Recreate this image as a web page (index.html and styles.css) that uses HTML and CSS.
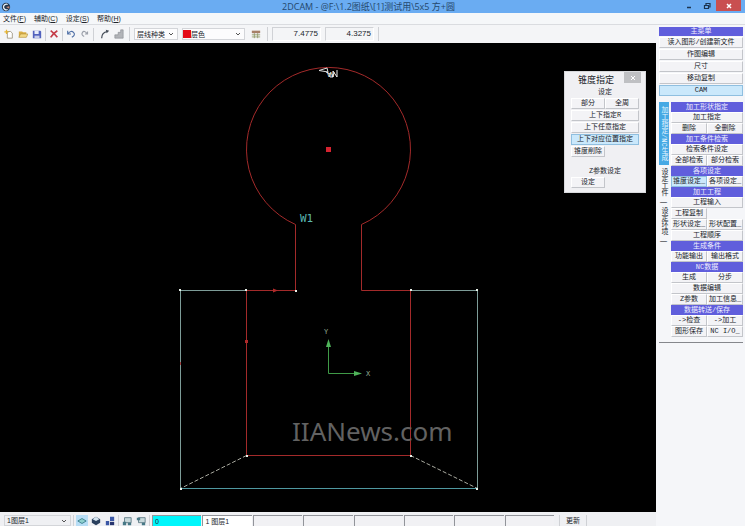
FILE: index.html
```html
<!DOCTYPE html>
<html lang="zh-CN">
<head>
<meta charset="utf-8">
<title>2DCAM</title>
<link rel="stylesheet" href="styles.css">
</head>
<body>
<header class="titlebar">
  <svg class="app-icon" viewBox="0 0 12 12" aria-hidden="true"><circle cx="6" cy="6" r="5" fill="#26384e"/><path d="M8 3a3.4 3.4 0 1 0 0 6" fill="none" stroke="#e4eef8" stroke-width="1.6"/><path d="M6 6l4-1v3z" fill="#c98b7a"/></svg>
  <h1 class="title">2DCAM - @F:\1.2图纸\[1]测试用\5x5 方+圆</h1>
  <div class="window-controls">
    <button class="win" aria-label="最小化"><svg viewBox="0 0 8 8"><path d="M2 5.500h4" stroke="#1c3450" stroke-width="1.500"/></svg></button>
    <button class="win" aria-label="还原"><svg viewBox="0 0 8 8"><path d="M3 3V1.500h4V5H5.500M1.500 3.500h4v3h-4z" fill="none" stroke="#1c3450" stroke-width="1.200"/></svg></button>
    <button class="win win-close" aria-label="关闭"><svg viewBox="0 0 8 8"><path d="M2 2l4 4M6 2L2 6" stroke="#fff" stroke-width="1.500"/></svg></button>
  </div>
</header>
<nav class="menubar">
  <button>文件(<u>F</u>)</button>
  <button>辅助(<u>C</u>)</button>
  <button>设定(<u>S</u>)</button>
  <button>帮助(<u>H</u>)</button>
</nav>
<div class="workspace">
  <main class="editor">
    <div class="toolbar">
      <div class="tools">
        <button class="tool" aria-label="新建"><svg viewBox="0 0 12 12"><path d="M4 3h4l2 2v6H4z" fill="#fff" stroke="#9a927d"/><path d="M3 1v5M.5 3.500h5" stroke="#e6b532" stroke-width="1.500"/></svg></button>
        <button class="tool" aria-label="打开"><svg viewBox="0 0 12 12"><path d="M1 10V3h4l1 1h4v6z" fill="#d9ae45"/><path d="M1 10l2-4h9l-2 4z" fill="#f4d984" stroke="#a4802c" stroke-width=".6"/></svg></button>
        <button class="tool" aria-label="保存"><svg viewBox="0 0 12 12"><path d="M1 2h9l1 1v8H1z" fill="#5262bd"/><path d="M3 2h5v4H3z" fill="#e8edfa"/><path d="M3 8h6v3H3z" fill="#c7cdea"/></svg></button>
        <i class="rule"></i>
        <button class="tool" aria-label="删除"><svg viewBox="0 0 12 12"><path d="M2 2q4 3 8 8M10 2Q5 5 2 10" fill="none" stroke="#c43c48" stroke-width="2"/></svg></button>
        <i class="rule"></i>
        <button class="tool" aria-label="撤销"><svg viewBox="0 0 12 12"><path d="M2 2v4h4M2 6q4-5 7-2t-2 6" fill="none" stroke="#5272a8" stroke-width="1.400"/></svg></button>
        <button class="tool" aria-label="重做"><svg viewBox="0 0 12 12"><path d="M9 3v3H6M9 6Q5 1 3 4t2 5" fill="none" stroke="#9ba0aa" stroke-width="1.400"/></svg></button>
        <i class="rule"></i>
        <button class="tool tool-wide" aria-label="圆弧"><svg viewBox="0 0 12 12"><path d="M2 11Q2 4 9 3" fill="none" stroke="#444c57" stroke-width="1.500"/><path d="M7 1l4 1-3 3z" fill="#444c57"/></svg></button>
        <button class="tool" aria-label="台阶"><svg viewBox="0 0 12 12"><path d="M1 11V7h4V4h3V1h3v10z" fill="#b2b4b8" stroke="#85888f" stroke-width=".7"/></svg></button>
      </div>
      <i class="rule"></i>
      <select class="line-kind" aria-label="层线种类"><option>层线种类</option></select>
      <div class="color-pick"><span class="swatch"></span><select aria-label="颜色"><option>层色</option></select></div>
      <button class="tool tool-last" aria-label="线型表"><svg viewBox="0 0 12 12"><path d="M1 2h10v3H1z" fill="#a78068"/><path d="M1 7h10M1 9.500h10M4 5v6M8 5v6" stroke="#8e9665"/></svg></button>
      <i class="rule"></i>
      <output class="coord" aria-label="X">7.4775</output>
      <output class="coord" aria-label="Y">4.3275</output>
      <i class="rule"></i>
    </div>
    <div class="canvas">
      <svg class="drawing" viewBox="0 43 656 469" preserveAspectRatio="xMinYMin meet" role="img" aria-label="5x5 方+圆">
        <g fill="none" stroke-width="1">
          <path d="M295.500 290.500V224.500A82 82 0 1 1 361.500 224.500V290.500H410.500V455.500H246.500V290.500H295.500" stroke="#a32a2a"/>
          <path d="M246.500 290.500H180.500V488.500M410.500 290.500H477.500V488.500" stroke="#7d9c98"/>
          <path d="M180.500 488.500H477.500" stroke="#4f98a0"/>
          <path d="M246.500 455.500L180.500 488.500M410.500 455.500L477.500 488.500" stroke="#a9aaa0" stroke-dasharray="4 2"/>
          <path d="M328.500 346V373.500H355" stroke="#3f9a47"/>
        </g>
        <path d="M328.500 339l-2.500 8h5zM362 373.500l-8-2.500v5z" fill="#4fb45a"/>
        <g fill="#e8f0e8">
          <path d="M179 289h2v2h-2zM245 289h2v2h-2zM295 290h2v2h-2zM410 289h2v2h-2zM476 289h2v2h-2zM246 455h2v2h-2zM410 455h2v2h-2zM180 488h2v2h-2zM476 488h2v2h-2z"/>
        </g>
        <path d="M326 147h5v5h-5z" fill="#d52330"/>
        <path d="M273 288.500l5 2-5 2zM245 340h3v3h-3z" fill="#b02a2a"/>
        <path d="M180 362h1v3h-1z" fill="#a04040"/>
        <path d="M327 68l-8 2.500 9 1.500zM326 72l4 2M330 73v4h3v-3" fill="none" stroke="#ddd"/>
        <text class="marks" x="327" y="77">W</text>
        <path d="M333 77v-6l4 6v-7" fill="none" stroke="#eee"/>
        <text class="label" x="300" y="222">W1</text>
        <text class="axis" x="324" y="334">Y</text>
        <text class="axis" x="366" y="376">X</text>
        <text class="watermark" x="292" y="441">IIANews.com</text>
      </svg>
    </div>
    <footer class="statusbar">
      <select class="layer" aria-label="图层"><option>1图层1</option></select>
      <i class="rule"></i>
      <button class="tool chosen" aria-label="平面"><svg viewBox="0 0 12 12"><path d="M1 6l5-3 5 3-5 3z" fill="#8ed0ce" stroke="#337887"/></svg></button>
      <button class="tool" aria-label="实体"><svg viewBox="0 0 12 12"><path d="M6 1l5 3v4l-5 3-5-3V4z" fill="#2b405e"/><path d="M6 1l4 3-4 2-4-2z" fill="#d4e4ef"/></svg></button>
      <button class="tool" aria-label="层块"><svg viewBox="0 0 12 12"><path d="M1 6h4v5H1zM6 1h5v5H6z" fill="#3b57a5"/><path d="M6 7h5v4H6z" fill="#28366f"/></svg></button>
      <i class="rule"></i>
      <button class="tool" aria-label="视图一"><svg viewBox="0 0 12 12"><path d="M3 2h8v6H3z" fill="#c8d9dc" stroke="#597681"/><path d="M1 7h4v4H1zM7 8h4v3H7z" fill="#477987"/></svg></button>
      <button class="tool" aria-label="视图二"><svg viewBox="0 0 12 12"><path d="M3 2h8v6H3z" fill="#c8d9dc" stroke="#597681"/><path d="M1 2h4v3H1zM7 8h4v3H7z" fill="#477987"/></svg></button>
      <i class="rule"></i>
      <div class="slots">
        <input class="slot slot-cyan" aria-label="层号" value="0">
        <input class="slot slot-white" aria-label="层一" value="1 图层1">
        <input class="slot" aria-label="层二"><input class="slot" aria-label="层三"><input class="slot" aria-label="层四"><input class="slot" aria-label="层五"><input class="slot" aria-label="层六"><input class="slot" aria-label="层七">
      </div>
      <i class="rule"></i>
      <button class="update">更新</button>
      <i class="rule"></i>
    </footer>
    <section class="dialog" aria-labelledby="dialog-title">
      <div class="dialog-head"><h2 id="dialog-title">锥度指定</h2><button class="dialog-close" aria-label="关闭"><svg viewBox="0 0 8 8"><path d="M2 2l4 4M6 2L2 6" stroke="#fff"/></svg></button></div>
      <div class="dialog-body">
        <p class="wide">设定</p>
        <button>部分</button><button>全周</button>
        <button class="wide">上下指定R</button>
        <button class="wide">上下任意指定</button>
        <button class="wide active">上下对应位置指定</button>
        <button>锥度削除</button>
        <p class="wide">Z参数设定</p>
        <button>设定</button>
      </div>
    </section>
  </main>
  <aside class="sidebar">
    <section class="panel main-menu">
      <h2>主菜单</h2>
      <button class="wide">读入图形/创建新文件</button>
      <button class="wide">作图编辑</button>
      <button class="wide">尺寸</button>
      <button class="wide">移动复制</button>
      <button class="wide active">CAM</button>
    </section>
    <div class="cam">
      <div class="tabs" role="tablist">
        <button role="tab" aria-selected="true" class="tab selected">加工指定/NC生成</button>
        <button role="tab" class="tab">设定工件 |</button>
        <button role="tab" class="tab">设定环境 |</button>
      </div>
      <section class="panel cam-panel">
        <h2>加工形状指定</h2>
        <button class="wide">加工指定</button>
        <button>删除</button><button>全删除</button>
        <h2>加工条件检索</h2>
        <button class="wide">检索条件设定</button>
        <button>全部检索</button><button>部分检索</button>
        <h2>各项设定</h2>
        <button class="active">锥度设定_</button><button>各项设定_</button>
        <h2>加工工程</h2>
        <button class="wide">工程输入</button>
        <button class="alone">工程复制</button>
        <button>形状设定_</button><button>形状配置_</button>
        <button class="wide">工程顺序</button>
        <h2>生成条件</h2>
        <button>功能输出</button><button>输出格式</button>
        <h2>NC数据</h2>
        <button>生成</button><button>分步</button>
        <button class="wide">数据编辑</button>
        <button>Z参数</button><button>加工信息_</button>
        <h2>数据转送/保存</h2>
        <button>-&gt;检查</button><button>-&gt;加工</button>
        <button>图形保存</button><button>NC I/O_</button>
      </section>
    </div>
  </aside>
</div>
</body>
</html>
```
FILE: styles.css
```css
* { box-sizing: border-box; }

body {
  margin: 0;
  height: 100vh;
  display: flex;
  flex-direction: column;
  overflow: hidden;
  background: #f5f6f9;
  color: #20242a;
  font: 7px/9px "Liberation Sans", "Noto Sans CJK SC", sans-serif;
}

button, select, input {
  margin: 0;
  padding: 0;
  border: 0;
  border-radius: 0;
  background: none;
  color: inherit;
  font: inherit;
}

h1, h2, p { margin: 0; font: inherit; }
svg { display: block; }

.titlebar {
  display: flex;
  align-items: center;
  height: 13px;
  padding-left: 1px;
  background: #6aacf2;
}
.app-icon { width: 10px; height: 10px; }
.title {
  flex: 1;
  padding-left: 46px;
  text-align: center;
  color: #25486c;
  font: 9px/13px "Open Sans", "Noto Sans CJK SC", sans-serif;
}
.window-controls { display: flex; align-self: flex-start; padding-right: 4px; }
.win { display: grid; place-items: center; width: 18px; height: 11px; }
.win svg { width: 8px; height: 8px; }
.win-close { width: 25px; background: #c94f50; }

.menubar {
  display: flex;
  gap: 8px;
  height: 12px;
  padding-left: 3px;
  background: #f5f7f9;
  border-bottom: 1px solid #dadce0;
}

.workspace { display: flex; flex: 1; min-height: 0; }
.editor { position: relative; display: flex; flex: 1; flex-direction: column; min-width: 0; }

.toolbar {
  display: flex;
  align-items: center;
  gap: 4px;
  height: 18px;
  padding: 2px 3px;
  background: #f4f5f7;
}
.tools { display: flex; align-items: center; gap: 2px; }
.rule { flex: none; align-self: stretch; width: 1px; background: #cfd1d5; }
.tool { display: grid; flex: none; place-items: center; width: 12px; height: 13px; }
.tool svg { width: 10px; height: 10px; }
.tool-wide { margin-left: 3px; }
.tool-last { margin: 0 1px; }

select {
  appearance: none;
  padding: 0 12px 0 2px;
  background: url("data:image/svg+xml,%3Csvg xmlns='http://www.w3.org/2000/svg' viewBox='0 0 6 6'%3E%3Cpath d='M1 2l2 2 2-2' fill='none' stroke='%23555'/%3E%3C/svg%3E") right 3px center / 6px 6px no-repeat #fcfcfd;
  border: 1px solid #d3d5d9;
}
.line-kind { width: 44px; height: 12px; }
.color-pick {
  display: flex;
  align-items: center;
  width: 63px;
  height: 12px;
  background: #fcfcfd;
  border: 1px solid #d3d5d9;
}
.color-pick select { flex: 1; padding-left: 0; border: 0; }
.swatch { width: 8px; height: 8px; background: #e40b18; }
.coord {
  width: 49px;
  height: 14px;
  padding-right: 2px;
  border: 1px solid #d0d2d6;
  border-right-color: #fff;
  border-bottom-color: #fff;
  text-align: right;
  font: 8px/12px "Liberation Sans", sans-serif;
}

.canvas { flex: 1; min-height: 0; background: #000; }
.drawing { width: 100%; height: 100%; }
.label { fill: #5bb8b0; font: 11px "DejaVu Sans Mono", monospace; }
.axis { fill: #91a891; font: 7px "DejaVu Sans Mono", monospace; }
.marks { fill: #fff; font: 8px "Liberation Sans", sans-serif; }
.watermark { fill: #626262; font: 26px "Noto Sans", sans-serif; }

.statusbar {
  display: flex;
  align-items: stretch;
  gap: 2px;
  height: 14px;
  padding: 3px 0 0 4px;
  background: #eff0f3;
}
.statusbar .tool { height: 11px; }
.layer { flex: none; width: 67px; background-color: #eff0f3; }
.chosen { background: #b7ddf5; }
.slots { display: flex; flex: 1; gap: 1px; min-width: 0; padding-right: 3px; }
.slot {
  flex: 1;
  min-width: 0;
  padding-left: 2px;
  background: #f1f1f4;
  border: 1px solid #92949a;
  border-width: 1px 0 0 1px;
}
.slot-cyan { background: #00f6fb; }
.slot-white { background: #fff; }
.update { flex: none; width: 22px; }
.statusbar > .rule:last-child { margin-right: 69px; }

.dialog {
  position: absolute;
  top: 46px;
  right: 10px;
  width: 82px;
  height: 122px;
  background: #f0f0f3;
  border: 1px solid #d8d9dc;
}
.dialog-head { display: flex; justify-content: space-between; height: 16px; padding-right: 4px; }
.dialog-head h2 { padding-left: 13px; font-size: 9px; line-height: 17px; }
.dialog-close { display: grid; place-items: center; width: 17px; height: 11px; background: #bfc0c3; }
.dialog-close svg { width: 8px; height: 8px; }
.dialog-body {
  display: grid;
  grid-template-columns: 1fr 1fr;
  grid-template-rows: 9px repeat(5, 11px) 18px 11px;
  row-gap: 1px;
  padding: 0 6px;
}
.dialog-body p { align-self: end; text-align: center; }

.dialog-body, .panel, .tabs { font-family: "Liberation Mono", "Noto Sans CJK SC", monospace; }

.dialog-body button, .panel button {
  overflow: hidden;
  background: #f3f3f6;
  border: 1px solid #fff;
  border-right-color: #c3c5ca;
  border-bottom-color: #c3c5ca;
  text-align: center;
  white-space: nowrap;
}
.wide { grid-column: 1 / -1; }
.alone, .alone + button { grid-column: 1; }
.dialog-body .active, .panel .active { background: #cae8fb; border-color: #8fbfe0; }

.sidebar {
  flex: none;
  width: 89px;
  padding: 2px 2px 0 3px;
  background: #f5f6f9;
}
.panel {
  display: grid;
  grid-template-columns: 1fr 1fr;
  grid-auto-rows: 11px;
}
.panel h2 {
  grid-column: 1 / -1;
  background: #605edc;
  color: #f0efff;
  text-align: center;
}
.main-menu { grid-template-rows: 9px; row-gap: 1px; }
.cam {
  display: flex;
  gap: 2px;
  margin-top: 6px;
  padding-bottom: 5px;
  border-bottom: 1px solid #85878c;
}
.tabs { display: flex; flex-direction: column; gap: 3px; width: 10px; }
.tab {
  width: 10px;
  writing-mode: vertical-rl;
  line-height: 10px;
  text-align: center;
  white-space: nowrap;
}
.selected { padding: 4px 0; background: #46a9e4; color: #e5f5ff; }
.cam-panel { flex: 1; grid-auto-rows: auto; align-content: start; }
.cam-panel h2 { height: 10px; line-height: 10px; }
.cam-panel button { height: 11px; }
```
